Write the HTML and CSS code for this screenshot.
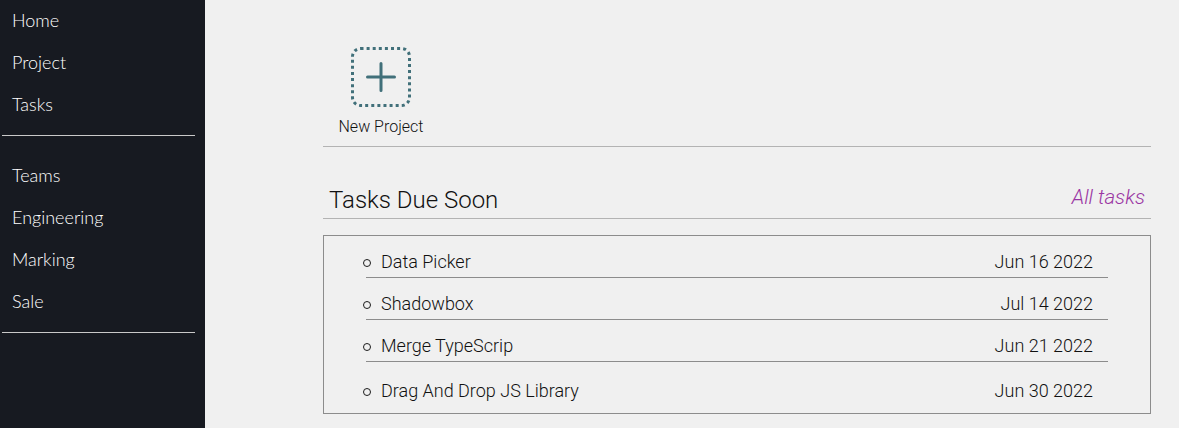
FILE: index.html
```html
<!DOCTYPE html>
<html lang="en">
<head>
<meta charset="utf-8">
<title>Dashboard</title>
<link rel="stylesheet" href="styles.css">
</head>
<body>
<div class="app">
  <aside class="sidebar">
    <nav class="nav-group">
      <a class="nav-item" href="#">Home</a>
      <a class="nav-item" href="#">Project</a>
      <a class="nav-item" href="#">Tasks</a>
    </nav>
    <div class="nav-divider"></div>
    <nav class="nav-group teams">
      <a class="nav-item" href="#">Teams</a>
      <a class="nav-item" href="#">Engineering</a>
      <a class="nav-item" href="#">Marking</a>
      <a class="nav-item" href="#">Sale</a>
    </nav>
    <div class="nav-divider second"></div>
  </aside>
  <main class="main">
    <section class="projects">
      <div class="new-project">
        <svg class="new-icon" width="60" height="60" viewBox="0 0 60 60">
          <rect x="1.5" y="1.5" width="57" height="57" rx="8" ry="8" fill="none" stroke="#41707a" stroke-width="3" stroke-dasharray="3 3.1"/>
          <path d="M30 16.5 V43.5 M16.5 30 H43.5" stroke="#41707a" stroke-width="3" stroke-linecap="round"/>
        </svg>
        <span class="new-label">New Project</span>
      </div>
    </section>
    <section class="tasks">
      <div class="tasks-head">
        <h2 class="tasks-title">Tasks Due Soon</h2>
        <a class="all-tasks" href="#">All tasks</a>
      </div>
      <ul class="task-list">
        <li class="task-row"><span class="task-name">Data Picker</span><span class="task-date">Jun 16 2022</span></li>
        <li class="task-row"><span class="task-name">Shadowbox</span><span class="task-date">Jul 14 2022</span></li>
        <li class="task-row"><span class="task-name">Merge TypeScrip</span><span class="task-date">Jun 21 2022</span></li>
        <li class="task-row last"><span class="task-name">Drag And Drop JS Library</span><span class="task-date">Jun 30 2022</span></li>
      </ul>
    </section>
  </main>
</div>
</body>
</html>
```

FILE: styles.css
```css
* { box-sizing: border-box; }
html, body { margin: 0; padding: 0; height: 100%; }
body {
  background: #f0f0f0;
  font-family: Roboto, "Liberation Sans", sans-serif;
  color: #1c1c1c;
  overflow: hidden;
}
.app {
  display: flex;
  height: 428px;
}
.sidebar {
  width: 205px;
  flex: 0 0 205px;
  background: #171a21;
  display: flex;
  flex-direction: column;
}
.nav-group {
  display: flex;
  flex-direction: column;
}
.nav-item {
  display: block;
  padding-left: 12px;
  line-height: 41px;
  height: 42px;
  font-family: Lato, "Noto Sans", sans-serif;
  font-size: 18px;
  font-weight: 300;
  color: #ffffff;
  text-decoration: none;
}
.nav-divider {
  height: 1px;
  background: #c9c9c9;
  margin: 9px 10px 0 2px;
}
.teams { margin-top: 19px; }
.nav-divider.second { margin-top: 9px; }

.main {
  flex: 1;
  padding: 47px 28px 0 118px;
  display: flex;
  flex-direction: column;
}
.projects {
  display: flex;
  padding-bottom: 9px;
  border-bottom: 1px solid #b3b3b3;
}
.new-project {
  width: 116px;
  display: flex;
  flex-direction: column;
  align-items: center;
}
.new-icon { display: block; }
.new-label {
  margin-top: 10px;
  font-size: 16px;
  line-height: 20px;
  font-weight: 300;
  color: #111;
}

.tasks-head {
  display: flex;
  justify-content: space-between;
  align-items: flex-end;
  height: 72px;
  padding: 0 6px;
  border-bottom: 1px solid #b3b3b3;
}
.tasks-title {
  margin: 0 0 4px;
  font-size: 24px;
  line-height: 28px;
  font-weight: 300;
  color: #111;
}
.all-tasks {
  margin-bottom: 9px;
  font-size: 20.5px;
  line-height: 24px;
  font-weight: 300;
  font-style: italic;
  color: #9a35a3;
  text-decoration: none;
}
.task-list {
  list-style: none;
  margin: 16px 0 0;
  padding: 0 42px 7px 42px;
  border: 1px solid #8c8c8c;
}
.task-row {
  display: flex;
  justify-content: space-between;
  align-items: center;
  padding: 16px 15px 5px 15px;
  border-bottom: 1px solid #8c8c8c;
  font-size: 18px;
  line-height: 20px;
  font-weight: 300;
  position: relative;
}
.task-row::before {
  content: "";
  position: absolute;
  left: -3px;
  top: 23px;
  width: 6px;
  height: 6px;
  border: 1px solid #1c1c1c;
  border-radius: 50%;
}
.task-row.last {
  border-bottom: none;
  padding-top: 19px;
}
.task-row.last::before { top: 26px; }
.task-name { color: #111; }
.task-date { color: #111; }
```
